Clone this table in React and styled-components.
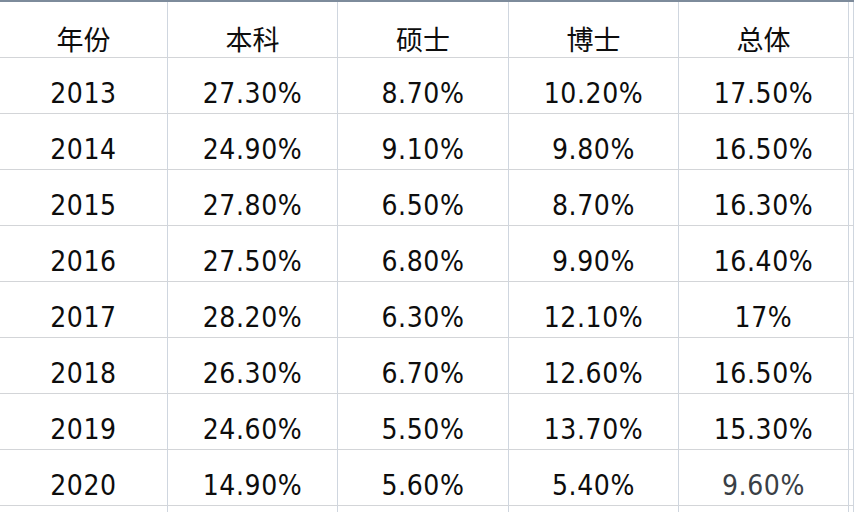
import React from "react";
import styled, { createGlobalStyle } from "styled-components";

const Global = createGlobalStyle`
  html, body { margin: 0; padding: 0; background: #ffffff; }
  body { width: 854px; height: 512px; overflow: hidden; }
`;

const Sheet = styled.div`
  display: grid;
  grid-template-columns: 168px 170px 171px 170px 170px 1fr;
  grid-auto-rows: 56px;
  width: 854px;
  height: 512px;
  overflow: hidden;
  box-sizing: border-box;
  border-top: 2px solid #7d8b9b;
  background: #ffffff;
`;

const Cell = styled.div`
  box-sizing: border-box;
  display: flex;
  align-items: flex-end;
  justify-content: center;
  padding-bottom: ${(p) => (p.$head ? "5px" : "5px")};
  border-right: 1px solid #cfd6df;
  border-bottom: 1px solid #d3d5d8;
  font-family: ${(p) =>
    p.$head
      ? '"Noto Sans CJK SC", "Noto Sans", sans-serif'
      : '"DejaVu Sans Condensed", "DejaVu Sans", sans-serif'};
  font-stretch: condensed;
  font-size: ${(p) => (p.$head ? "27px" : "28px")};
  letter-spacing: ${(p) => (p.$head ? "0" : "0.6px")};
  line-height: 1;
  color: ${(p) => (p.$faded ? "#3a3f46" : "#0d0d0d")};
  white-space: nowrap;
`;

const headers = ["年份", "本科", "硕士", "博士", "总体"];
const rows = [
  ["2013", "27.30%", "8.70%", "10.20%", "17.50%"],
  ["2014", "24.90%", "9.10%", "9.80%", "16.50%"],
  ["2015", "27.80%", "6.50%", "8.70%", "16.30%"],
  ["2016", "27.50%", "6.80%", "9.90%", "16.40%"],
  ["2017", "28.20%", "6.30%", "12.10%", "17%"],
  ["2018", "26.30%", "6.70%", "12.60%", "16.50%"],
  ["2019", "24.60%", "5.50%", "13.70%", "15.30%"],
  ["2020", "14.90%", "5.60%", "5.40%", "9.60%"],
];

export default function App() {
  return (
    <>
      <Global />
      <Sheet>
        {headers.map((h) => (
          <Cell key={h} $head>
            {h}
          </Cell>
        ))}
        <Cell $head />
        {rows.map((r, i) => (
          <React.Fragment key={r[0]}>
            {r.map((v, j) => (
              <Cell key={j} $faded={i === rows.length - 1 && j === 4}>
                {v}
              </Cell>
            ))}
            <Cell />
          </React.Fragment>
        ))}
        {Array.from({ length: 6 }).map((_, j) => (
          <Cell key={"e" + j} />
        ))}
      </Sheet>
    </>
  );
}
